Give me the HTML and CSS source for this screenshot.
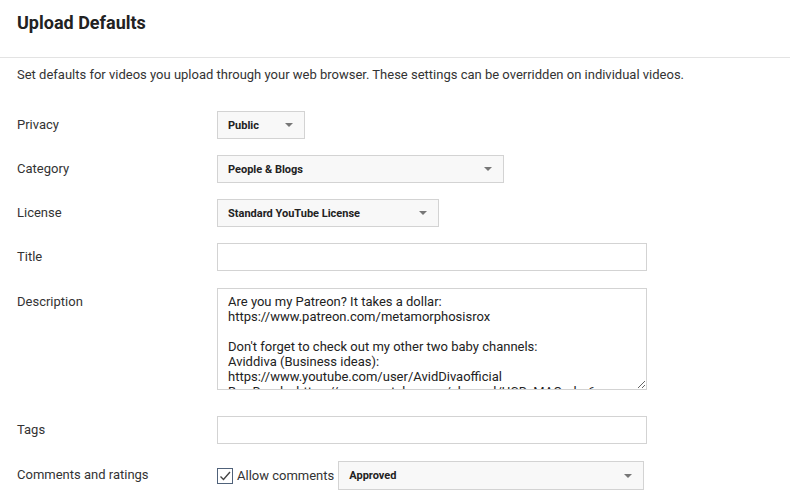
FILE: index.html
```html
<!DOCTYPE html>
<html>
<head>
<meta charset="utf-8">
<link rel="stylesheet" href="styles.css">
</head>
<body>
<div class="page">
  <div class="header">Upload Defaults</div>
  <p class="intro">Set defaults for videos you upload through your web browser. These settings can be overridden on individual videos.</p>

  <div class="row">
    <div class="label">Privacy</div>
    <div class="select w-privacy"><span>Public</span><span class="arrow"></span></div>
  </div>
  <div class="row">
    <div class="label">Category</div>
    <div class="select w-category"><span>People &amp; Blogs</span><span class="arrow"></span></div>
  </div>
  <div class="row">
    <div class="label">License</div>
    <div class="select w-license"><span>Standard YouTube License</span><span class="arrow"></span></div>
  </div>
  <div class="row gap-17">
    <div class="label">Title</div>
    <input class="text" type="text">
  </div>
  <div class="row gap-26">
    <div class="label">Description</div>
    <textarea class="desc">Are you my Patreon? It takes a dollar:
https://www.patreon.com/metamorphosisrox

Don't forget to check out my other two baby channels:
Aviddiva (Business ideas):
https://www.youtube.com/user/AvidDivaofficial
Bay Doods: https://www.youtube.com/channel/UCDyMAOndm6</textarea>
  </div>
  <div class="row gap-17">
    <div class="label">Tags</div>
    <input class="text" type="text">
  </div>
  <div class="row">
    <div class="label">Comments and ratings</div>
    <div class="options">
      <div class="opt">
        <span class="check"><svg width="14" height="14" viewBox="0 0 14 14"><path d="M2.5 7.5 L5.5 10.5 L12 3" fill="none" stroke="#444" stroke-width="1.4"/></svg></span>
        <span class="opt-text">Allow comments</span>
        <div class="select w-approved"><span>Approved</span><span class="arrow"></span></div>
      </div>
      <div class="opt">
        <span class="check"></span>
      </div>
    </div>
  </div>
</div>
</body>
</html>
```

FILE: styles.css
```css
html, body {
  margin: 0;
  padding: 0;
  background: #fff;
}
body {
  font-family: Roboto, "Liberation Sans", Arial, sans-serif;
  color: #333;
  overflow: hidden;
}
.page {
  width: 790px;
}
.header {
  height: 58px;
  box-sizing: border-box;
  border-bottom: 1px solid #e3e3e3;
  padding-left: 17px;
  line-height: 46px;
  font-size: 18px;
  font-weight: 700;
  color: #222;
}
.intro {
  margin: 0;
  padding: 9px 17px 0;
  font-size: 13px;
  line-height: 16px;
  color: #333;
  margin-bottom: 28px;
}
.row {
  display: flex;
  align-items: flex-start;
  padding-left: 17px;
  margin-bottom: 16px;
}
.row.gap-17 { margin-bottom: 17px; }
.row.gap-26 { margin-bottom: 26px; }
.label {
  width: 200px;
  flex: none;
  font-size: 13px;
  line-height: 28px;
  color: #333;
}
.select {
  box-sizing: border-box;
  height: 28px;
  display: flex;
  align-items: center;
  justify-content: space-between;
  padding: 0 11px 0 10px;
  background: #f8f8f8;
  border: 1px solid #d3d3d3;
  font-size: 11px;
  font-weight: 700;
  color: #222;
}
.arrow {
  width: 0;
  height: 0;
  border-left: 4px solid transparent;
  border-right: 4px solid transparent;
  border-top: 4px solid #777;
}
.w-privacy { width: 88px; }
.w-category { width: 287px; }
.w-license { width: 222px; }
.w-approved { width: 306px; height: 29px; margin-left: 4px; }
.text {
  box-sizing: border-box;
  width: 430px;
  height: 28px;
  margin: 0;
  border: 1px solid #d3d3d3;
  background: #fff;
  outline: none;
  padding: 0 10px;
  font-family: inherit;
}
.desc {
  display: block;
  box-sizing: border-box;
  width: 430px;
  height: 102px;
  margin: 0;
  border: 1px solid #d3d3d3;
  padding: 5px 10px;
  font-family: Roboto, "Liberation Sans", Arial, sans-serif;
  font-size: 13px;
  line-height: 15px;
  color: #222;
  overflow: hidden;
  resize: vertical;
  white-space: pre;
  outline: none;
}
.options {
  display: flex;
  flex-direction: column;
}
.opt {
  display: flex;
  align-items: center;
  height: 29px;
}
.opt + .opt {
  margin-top: 2px;
}
.check {
  box-sizing: border-box;
  width: 16px;
  height: 16px;
  border: 1px solid #50627a;
  background: #fff;
  display: flex;
  align-items: center;
  justify-content: center;
  flex: none;
}
.check svg { display: block; }
.opt-text {
  margin-left: 4px;
  font-size: 13px;
  color: #333;
}
```
